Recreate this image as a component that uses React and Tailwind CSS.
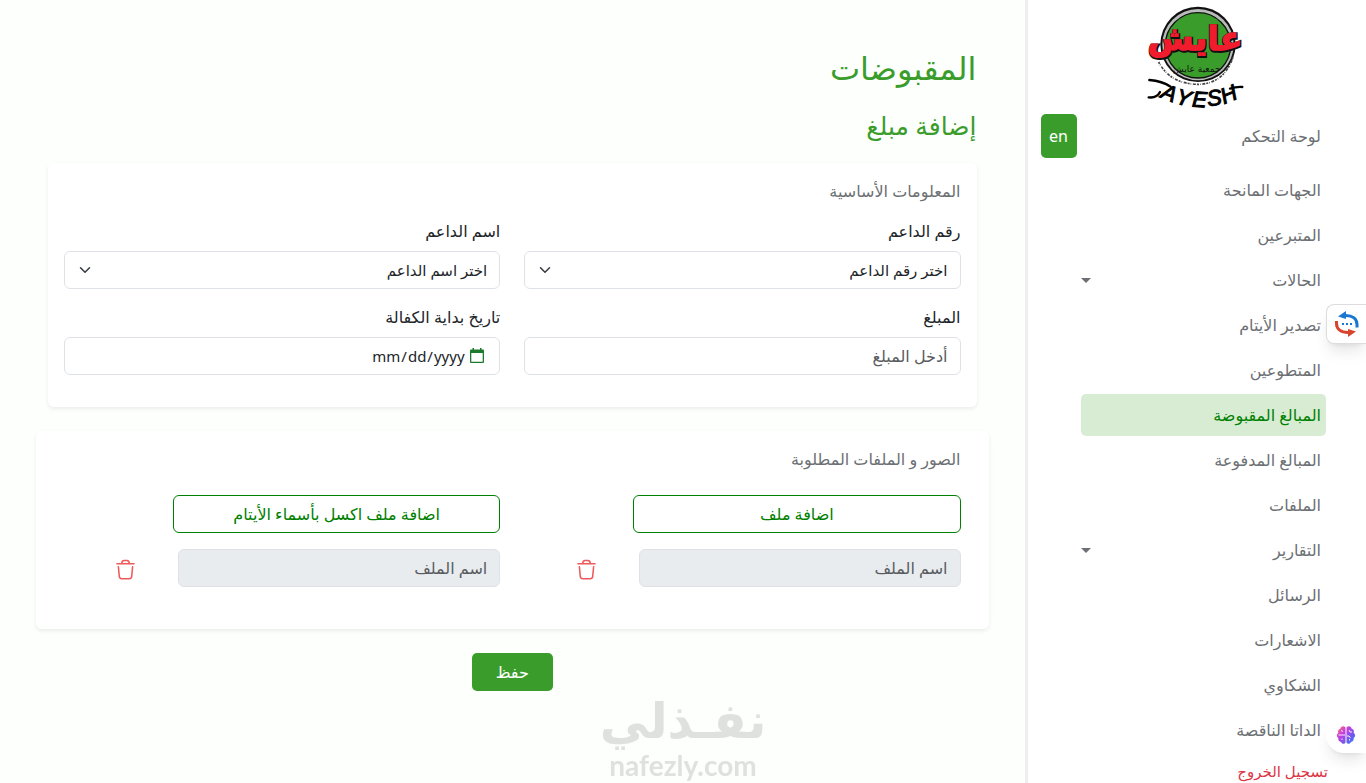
import React, { useState } from "react";

const NAV_ITEMS = [
  { label: "الجهات المانحة" },
  { label: "المتبرعين" },
  { label: "الحالات", dropdown: true },
  { label: "تصدير الأيتام" },
  { label: "المتطوعين" },
  { label: "المبالغ المقبوضة", active: true },
  { label: "المبالغ المدفوعة" },
  { label: "الملفات" },
  { label: "التقارير", dropdown: true },
  { label: "الرسائل" },
  { label: "الاشعارات" },
  { label: "الشكاوي" },
  { label: "الداتا الناقصة" },
];

// hand-lettered name under the badge, one entry per letter
const LOGO_LETTERS = [
  { char: "A", x: 110, y: 300, angle: 22 },
  { char: "Y", x: 156, y: 315, angle: 14 },
  { char: "E", x: 207, y: 321, angle: 4 },
  { char: "S", x: 256, y: 316, angle: -8 },
  { char: "H", x: 304, y: 304, angle: -22 },
];

const Logo = () => (
  <svg viewBox="0 0 390 336" className="block h-28 w-[130px] overflow-visible" role="img" aria-label="AYESH" direction="ltr">
    <circle cx="204" cy="133" r="113" fill="#111" />
    <circle cx="204" cy="134" r="107" fill="#b9bdb9" />
    <circle cx="204" cy="136" r="98" fill="#3a9d2b" stroke="#111" strokeWidth="4" />
    <text x="197" y="154" textAnchor="middle" fontFamily="DejaVu Sans" fontWeight="700" fontSize="100" fill="#111" stroke="#111" strokeWidth="10">عايش</text>
    <text x="195" y="151" textAnchor="middle" fontFamily="DejaVu Sans" fontWeight="700" fontSize="100" fill="#f01c2e" stroke="#f01c2e" strokeWidth="4">عايش</text>
    <text x="200" y="216" textAnchor="middle" fontFamily="DejaVu Sans" fontSize="27" fill="#111">جمعية عايش</text>
    <path d="M86 186C112 236 155 252 205 253C255 252 292 226 310 168" fill="none" stroke="#444" strokeWidth="5" strokeDasharray="6 3 2 5 9 3" />
    {LOGO_LETTERS.map(({ char, x, y, angle }) => (
      <text key={char} x={x} y={y} transform={`rotate(${angle} ${x} ${y})`} textAnchor="middle" fontFamily="Liberation Sans" fontStyle="italic" fontSize="66" fill="#000" stroke="#000" strokeWidth="3" direction="ltr">{char}</text>
    ))}
    <g fill="none" stroke="#000" strokeWidth="7" strokeLinecap="round">
      <path d="M58 240C82 242 104 248 122 260M56 292C72 294 84 288 90 276" />
      <path d="M300 266C312 262 324 260 337 261" />
    </g>
  </svg>
);

const Chevron = () => (
  <svg viewBox="0 0 16 16" className="pointer-events-none absolute left-3 top-[13px] h-3 w-[18px]" fill="none" stroke="#343a40" strokeWidth="2" strokeLinecap="round" strokeLinejoin="round">
    <path d="m2 5 6 6 6-6" />
  </svg>
);

const Trash = () => (
  <svg viewBox="0 0 20 22" className="h-[21px] w-[19px]" fill="none" stroke="#ee5a5a" strokeWidth="1.6" strokeLinecap="round" strokeLinejoin="round">
    <path d="M1 5h18M6 5c0-2.500 1-3.500 2.500-3.500h3c1.500 0 2.500 1 2.500 3.500M2.500 8l1 10.500c.2 1.500 1 2.200 2.500 2.200h8c1.500 0 2.300-.7 2.500-2.200l1-10.500" />
  </svg>
);

const SelectField = ({ id, label, placeholder }) => (
  <div>
    <label htmlFor={id} className="mb-2 block font-medium leading-6">{label}</label>
    <div className="relative">
      <select id={id} className="h-[38px] w-full appearance-none rounded-md border border-[#dee2e6] bg-white px-3 text-[15px]">
        <option>{placeholder}</option>
      </select>
      <Chevron />
    </div>
  </div>
);

const FileColumn = ({ id, action }) => (
  <div>
    <button type="button" className="block h-[38px] w-3/4 rounded-md border border-[#008000] font-medium text-[#008000]">
      {action}
    </button>
    <div className="mt-4 flex items-center">
      <input
        id={id}
        aria-label="اسم الملف"
        placeholder="اسم الملف"
        disabled
        className="h-[38px] w-[322px] min-w-0 rounded-md border border-[#dee2e6] bg-[#e9ecef] px-3 placeholder:text-[#595c5f]"
      />
      <button type="button" aria-label="حذف" className="mr-[43px] mt-[3px] shrink-0">
        <Trash />
      </button>
    </div>
  </div>
);

const Sidebar = () => (
  <aside className="w-1/4 shrink-0 border-l-[3px] border-[#eeeeee] bg-white pr-10 text-[#6c6f73]">
    <div className="-mr-9 mb-[2px] flex justify-center">
      <Logo />
    </div>
    <div className="flex items-center justify-between pl-[13px]">
      <a href="#dashboard" className="pr-[5px]">لوحة التحكم</a>
      <button type="button" className="h-11 w-9 rounded-[5px] bg-[#3a9d2b] text-white">en</button>
    </div>
    <nav className="mt-[11px] flex flex-col gap-[3px] pl-[53px]">
      {NAV_ITEMS.map((item) => (
        <a
          key={item.label}
          href="#page"
          className={`flex h-[42px] items-center justify-between rounded-[5px] pr-[5px] ${
            item.active ? "bg-[#d8ecd4] text-[#008000]" : ""
          }`}
        >
          {item.label}
          {item.dropdown && (
            <svg viewBox="0 0 10 5" className="h-[5px] w-[10px]" fill="#6c6f73">
              <path d="M0 0h10L5 5z" />
            </svg>
          )}
        </a>
      ))}
    </nav>
    <a href="#logout" className="-mr-[2px] mt-2 block text-[15px] leading-6 text-[#dc3545]">تسجيل الخروج</a>
  </aside>
);

const FloatingTools = () => (
  <>
    <button type="button" aria-label="chat" className="fixed right-0 top-[304px] flex h-10 w-10 items-center justify-center rounded-l-lg border border-r-0 border-[#dddddd] bg-white shadow-lg">
      <svg viewBox="0 0 26 26" className="h-[26px] w-[26px]" fill="none">
        <path d="M8 4.500h4c6 0 11 3 11 9v3" stroke="#1976d2" strokeWidth="3" />
        <path d="M4 5.500 12 0v8z" fill="#1976d2" />
        <path d="M18 21.500h-4C7 21.500 2.500 18 2.500 12.500V10" stroke="#d8432e" strokeWidth="3" />
        <path d="m22 20.500-8 5.500v-8z" fill="#d8432e" />
        <path d="M8 13h2M12 13h2M16 13h2" stroke="#1976d2" strokeWidth="2" />
      </svg>
    </button>
    <button type="button" aria-label="assistant" className="fixed right-0 top-[717px] flex h-9 w-10 items-center justify-center rounded-l-full bg-white shadow-lg">
      <svg viewBox="0 0 20 20" className="h-5 w-5">
        <defs>
          <linearGradient id="brain" x1="0" y1="0" x2="1" y2="1">
            <stop offset="0" stopColor="#ff7a59" />
            <stop offset=".35" stopColor="#c83de0" />
            <stop offset=".7" stopColor="#6a5cf0" />
            <stop offset="1" stopColor="#2f8df5" />
          </linearGradient>
        </defs>
        <path d="M9.500 2.500C8 .5 5 1 4.500 3.500 2.500 4 1.500 6 2.300 7.800.4 9 .4 12 2.300 13c-.4 2.300 1 3.800 2.700 4 .8 2.200 3.500 2.400 4.500.6zM10.500 2.500C12 .5 15 1 15.500 3.500c2 .5 3 2.500 2.200 4.300 1.900 1.200 1.900 4.200 0 5.200.4 2.300-1 3.800-2.700 4-.8 2.200-3.500 2.400-4.500.6z" fill="url(#brain)" />
        <path d="M2.500 10H9M5 5.500l2 1M6 13.500V15M13 5l1 2h2M11 11h2l1.500 2M13.500 15.500V14" fill="none" stroke="#fff" strokeWidth=".9" />
      </svg>
    </button>
  </>
);

const Watermark = () => (
  <div className="pointer-events-none fixed bottom-0 left-1/2 flex -translate-x-1/2 flex-col items-center pb-1 text-[#dfe1df]">
    <span className="font-['DejaVu_Sans'] text-[49px] font-bold leading-[58px]">نفـذلي</span>
    <span dir="ltr" className="font-['Lato'] text-[28px] font-bold leading-7">nafezly.com</span>
  </div>
);

const App = () => {
  const [amount, setAmount] = useState("");

  return (
    <div dir="rtl" className="flex min-h-screen bg-[#fcfffc] font-['Noto_Sans','DejaVu_Sans',sans-serif] text-base text-[#212529]">
      <Sidebar />
      <main className="min-w-0 flex-1 px-9 pt-12">
        <div className="px-3 text-[#3a9d2b]">
          <h1 className="text-[32px] font-medium leading-10">المقبوضات</h1>
          <h2 className="mt-5 text-[25px] font-medium leading-[35px]">إضافة مبلغ</h2>
        </div>

        <form onSubmit={(e) => e.preventDefault()}>
          <section className="mx-3 mt-5 rounded-md bg-white px-4 pb-8 pt-4 shadow-[0_2px_4px_rgba(0,0,0,0.075)]">
            <h3 className="leading-6 text-[#6c6f73]">المعلومات الأساسية</h3>
            <div className="mt-4 grid grid-cols-2 gap-x-6 gap-y-4">
              <SelectField id="donor-number" label="رقم الداعم" placeholder="اختر رقم الداعم" />
              <SelectField id="donor-name" label="اسم الداعم" placeholder="اختر اسم الداعم" />
              <div>
                <label htmlFor="amount" className="mb-2 block font-medium leading-6">المبلغ</label>
                <input
                  id="amount"
                  value={amount}
                  onChange={(e) => setAmount(e.target.value)}
                  placeholder="أدخل المبلغ"
                  className="h-[38px] w-full rounded-md border border-[#dee2e6] bg-white px-3 placeholder:text-[#595c5f]"
                />
              </div>
              <div>
                <label htmlFor="start-date" className="mb-2 block font-medium leading-6">تاريخ بداية الكفالة</label>
                <div className="relative">
                  <input
                    id="start-date"
                    type="date"
                    dir="ltr"
                    className="h-[38px] w-full rounded-md border border-[#dee2e6] bg-white px-3 text-[15px] [&::-webkit-calendar-picker-indicator]:absolute [&::-webkit-calendar-picker-indicator]:right-3 [&::-webkit-calendar-picker-indicator]:opacity-0 [&::-webkit-datetime-edit]:ml-auto [&::-webkit-datetime-edit]:flex-none"
                  />
                  <svg viewBox="0 0 14 15" className="pointer-events-none absolute right-4 top-[11px] h-[15px] w-[14px]" fill="#1d7a2c">
                    <path d="M2.500 0H4v1.500h6V0h1.500v1.500H13a1 1 0 0 1 1 1V14a1 1 0 0 1-1 1H1a1 1 0 0 1-1-1V2.500a1 1 0 0 1 1-1h1.500zM1.300 5v8.700h11.400V5z" />
                  </svg>
                </div>
              </div>
            </div>
          </section>

          <section className="mt-6 rounded-md bg-white px-7 pb-[42px] pt-4 shadow-[0_2px_4px_rgba(0,0,0,0.075)]">
            <h3 className="leading-6 text-[#6c6f73]">الصور و الملفات المطلوبة</h3>
            <div className="mt-6 grid grid-cols-2 gap-x-6">
              <FileColumn id="file" action="اضافة ملف" />
              <FileColumn id="excel-file" action="اضافة ملف اكسل بأسماء الأيتام" />
            </div>
          </section>

          <div className="mt-6 flex justify-center">
            <button type="submit" className="h-[38px] rounded-[5px] bg-[#3a9d2b] px-6 text-white">حفظ</button>
          </div>
        </form>
      </main>
      <Watermark />
      <FloatingTools />
    </div>
  );
};

export default App;
